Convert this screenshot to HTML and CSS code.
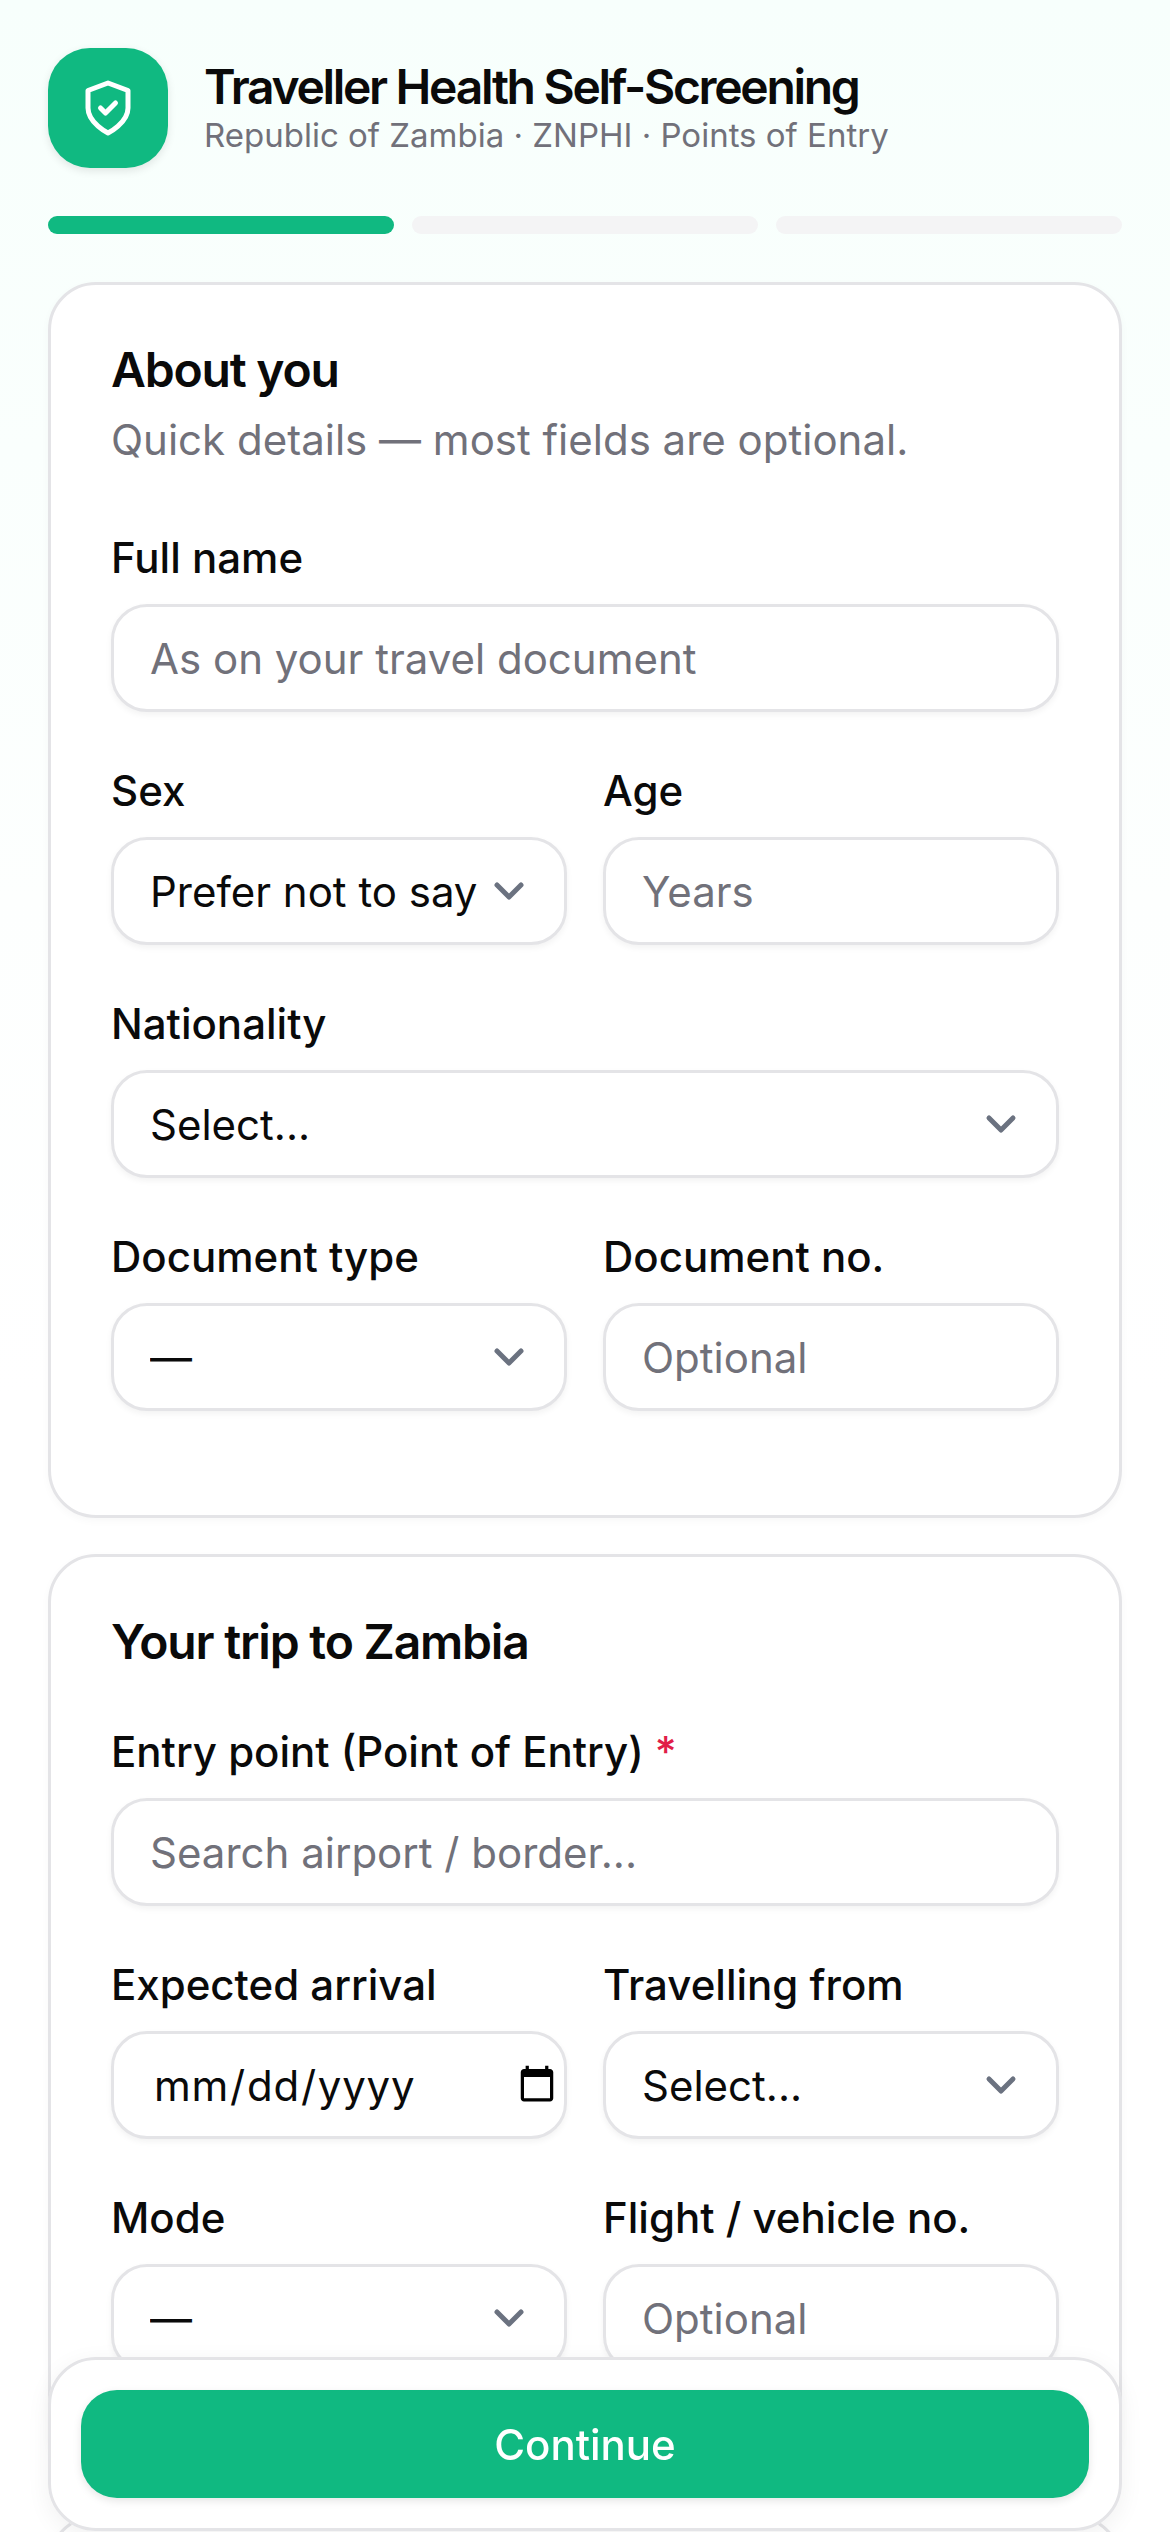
FILE: index.html
```html
<!DOCTYPE html>
<html lang="en">
<head>
    <meta charset="UTF-8">
    <meta name="viewport" content="width=device-width, initial-scale=1.0">
    <title>Traveller Health Self-Screening</title>
    <link rel="stylesheet" href="styles.css">
</head>
<body>

    <main class="page">
        <!-- Header -->
        <header class="brand">
            <div class="brand-logo">
                <svg viewBox="0 0 24 24" width="60" height="60" fill="none" stroke="#fff" stroke-width="2" stroke-linecap="round" stroke-linejoin="round">
                    <path d="M12 22s8-4 8-10V5l-8-3-8 3v7c0 6 8 10 8 10"/>
                    <path d="m9 12 2 2 4-4"/>
                </svg>
            </div>
            <div>
                <h1 class="brand-title">Traveller Health Self-Screening</h1>
                <p class="brand-sub">Republic of Zambia · ZNPHI · Points of Entry</p>
            </div>
        </header>

        <!-- Steps -->
        <div class="steps">
            <div class="step active"></div>
            <div class="step"></div>
            <div class="step"></div>
        </div>

        <!-- About you -->
        <section class="card">
            <div class="card-head">
                <h2 class="card-title">About you</h2>
                <p class="card-desc">Quick details — most fields are optional.</p>
            </div>

            <div class="field">
                <label class="label" for="full-name">Full name</label>
                <input class="control" id="full-name" type="text" placeholder="As on your travel document">
            </div>

            <div class="field-row">
                <div class="field">
                    <label class="label" for="sex">Sex</label>
                    <select class="control select" id="sex">
                        <option>Prefer not to say</option>
                        <option>Female</option>
                        <option>Male</option>
                    </select>
                </div>
                <div class="field">
                    <label class="label" for="age">Age</label>
                    <input class="control" id="age" type="text" placeholder="Years">
                </div>
            </div>

            <div class="field">
                <label class="label" for="nationality">Nationality</label>
                <select class="control select" id="nationality">
                    <option>Select...</option>
                </select>
            </div>

            <div class="field-row">
                <div class="field">
                    <label class="label" for="doc-type">Document type</label>
                    <select class="control select" id="doc-type">
                        <option>—</option>
                        <option>Passport</option>
                    </select>
                </div>
                <div class="field">
                    <label class="label" for="doc-no">Document no.</label>
                    <input class="control" id="doc-no" type="text" placeholder="Optional">
                </div>
            </div>
        </section>

        <!-- Trip -->
        <section class="card">
            <div class="card-head">
                <h2 class="card-title">Your trip to Zambia</h2>
            </div>

            <div class="field">
                <label class="label" for="entry-point">Entry point (Point of Entry) <span class="required">*</span></label>
                <input class="control" id="entry-point" type="text" placeholder="Search airport / border...">
            </div>

            <div class="field-row">
                <div class="field">
                    <label class="label" for="arrival">Expected arrival</label>
                    <input class="control date" id="arrival" type="date">
                </div>
                <div class="field">
                    <label class="label" for="from">Travelling from</label>
                    <select class="control select" id="from">
                        <option>Select...</option>
                    </select>
                </div>
            </div>

            <div class="field-row">
                <div class="field">
                    <label class="label" for="mode">Mode</label>
                    <select class="control select" id="mode">
                        <option>—</option>
                        <option>Air</option>
                        <option>Road</option>
                    </select>
                </div>
                <div class="field">
                    <label class="label" for="flight">Flight / vehicle no.</label>
                    <input class="control" id="flight" type="text" placeholder="Optional">
                </div>
            </div>
        </section>

        <!-- Next step, mostly under the footer -->
        <section class="card card-next"></section>
    </main>

    <!-- Sticky action -->
    <footer class="action-bar">
        <button class="continue-btn" type="button">Continue</button>
    </footer>

</body>
</html>
```

FILE: styles.css
```css
* {
    margin: 0;
    padding: 0;
    box-sizing: border-box;
    font-family: Inter, "Liberation Sans", sans-serif;
}
html, body {
    height: 100vh;
    overflow: hidden;
}
body {
    background: linear-gradient(180deg, #f7fffc 0, #fdfffe 900px, #fff 1400px);
    color: #0a0a0a;
}
.page {
    height: 100vh;
    padding: 48px;
    overflow: hidden;
}

/* Header */
.brand {
    display: flex;
    align-items: center;
    gap: 36px;
    margin-bottom: 48px;
}
.brand-logo {
    display: flex;
    align-items: center;
    justify-content: center;
    width: 120px;
    height: 120px;
    border-radius: 42px;
    background: #10b981;
    box-shadow: 0 3px 9px rgba(0, 0, 0, 0.1);
}
.brand-title {
    font-size: 48px;
    line-height: 54px;
    font-weight: 600;
    letter-spacing: -0.048em;
}
.brand-sub {
    font-size: 33px;
    line-height: 42px;
    color: #71717a;
}

/* Steps */
.steps {
    display: grid;
    grid-template-columns: repeat(3, 1fr);
    gap: 18px;
    margin-bottom: 48px;
}
.step {
    height: 18px;
    border-radius: 9px;
    background: #f4f4f5;
}
.step.active {
    background: #10b981;
}

/* Cards */
.card {
    margin-bottom: 36px;
    padding: 60px 60px 54px;
    border: 3px solid #e4e4e7;
    border-radius: 48px;
    background: #fff;
    box-shadow: 0 3px 9px rgba(0, 0, 0, 0.03);
}
.card-next {
    height: 400px;
}
.card-head {
    margin-bottom: 56px;
}
.card-title {
    font-size: 48px;
    line-height: 50px;
    font-weight: 600;
    letter-spacing: -0.025em;
}
.card-desc {
    margin-top: 14px;
    padding-bottom: 3px;
    font-size: 42px;
    line-height: 61px;
    color: #71717a;
}

/* Fields */
.field {
    margin-bottom: 50px;
}
.field-row {
    display: grid;
    grid-template-columns: repeat(2, minmax(0, 1fr));
    gap: 36px;
}
.label {
    display: block;
    margin-bottom: 17px;
    font-size: 42px;
    line-height: 58px;
    font-weight: 500;
}
.required {
    color: #e11d48;
}
.control {
    display: block;
    width: 100%;
    height: 108px;
    padding: 0 36px;
    border: 3px solid #e4e4e7;
    border-radius: 36px;
    outline: none;
    background-color: #fff;
    box-shadow: 0 3px 6px rgba(0, 0, 0, 0.05);
    color: #0a0a0a;
    font-size: 42px;
}
.control::placeholder {
    color: #71717a;
}
.select {
    appearance: none;
    padding-right: 84px;
    background-image: url("data:image/svg+xml,%3Csvg xmlns='http://www.w3.org/2000/svg' viewBox='0 0 24 24' fill='none' stroke='%236b7280' stroke-width='2.500' stroke-linecap='round' stroke-linejoin='round'%3E%3Cpath d='m6 9 6 6 6-6'/%3E%3C/svg%3E");
    background-repeat: no-repeat;
    background-position: right 31px center;
    background-size: 48px 48px;
}
.date {
    padding: 0 4px 0 39px;
    letter-spacing: 0.75px;
}

/* Sticky action */
.action-bar {
    position: fixed;
    left: 48px;
    right: 48px;
    bottom: 1px;
    padding: 30px;
    border: 3px solid #e4e4e7;
    border-radius: 48px;
    background: rgba(255, 255, 255, 0.95);
    backdrop-filter: blur(12px);
    box-shadow: 0 6px 24px rgba(0, 0, 0, 0.06);
}
.continue-btn {
    display: block;
    width: 100%;
    height: 108px;
    border: none;
    border-radius: 36px;
    background: #10b981;
    box-shadow: 0 3px 9px rgba(0, 0, 0, 0.1);
    color: #fff;
    font-size: 42px;
    font-weight: 500;
}
```
